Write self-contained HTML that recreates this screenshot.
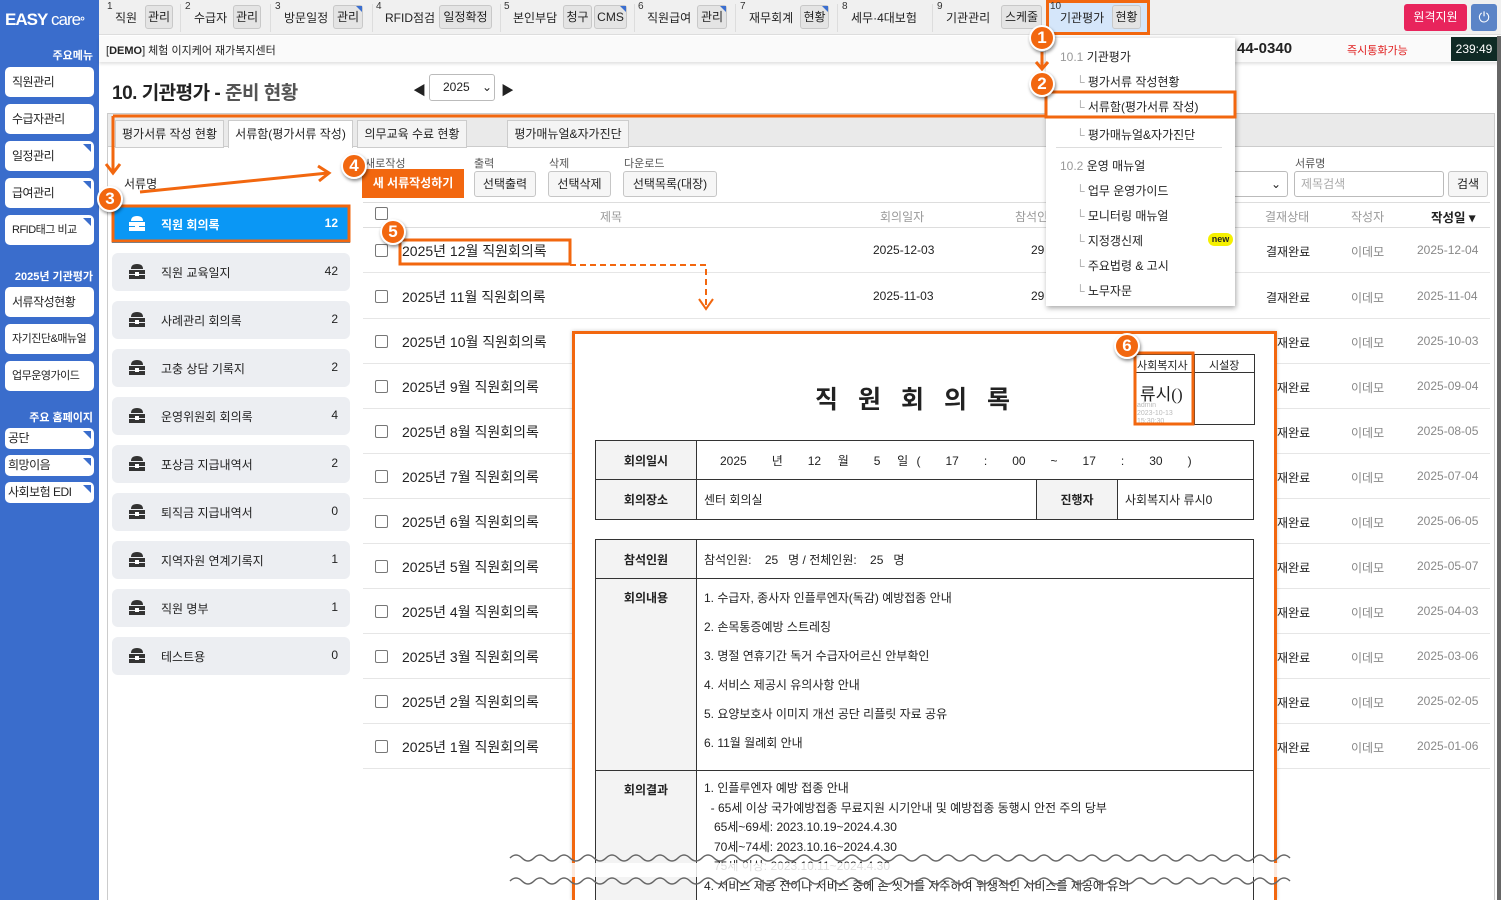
<!DOCTYPE html>
<html style="overflow:hidden;height:900px"><head><meta charset="utf-8"><style>
*{box-sizing:border-box;margin:0;padding:0}
body{width:1501px;height:900px;overflow:hidden;position:relative;background:#fff;font-family:"Liberation Sans","Noto Sans CJK KR",sans-serif;font-size:12px;color:#222}
.a{position:absolute;white-space:nowrap}
.sb{position:absolute;left:0;top:0;width:99px;height:900px;background:#3a6dcc}
.sbtn{position:absolute;left:5px;width:89px;background:#fff;border-radius:5px;font-size:12px;padding-left:7px;color:#222;letter-spacing:-.5px}
.sbtn.c::after{content:"";position:absolute;right:3px;top:3px;border-top:8px solid #3a6dcc;border-left:8px solid transparent}
.sl{position:absolute;right:6px;color:#fff;font-weight:bold;font-size:11px}
.nav{position:absolute;left:99px;top:0;width:1402px;height:35px;background:#f0f0f0;border-bottom:1px solid #ddd}
.n{position:absolute;top:1px;font-size:10px;color:#333}
.nl{position:absolute;top:9px;font-size:12px;color:#222}
.nb{position:absolute;top:5px;height:24px;background:#e4e4e4;border:1px solid #c8c8c8;border-radius:3px;font-size:12px;text-align:center;line-height:22px;color:#222}
.nb.c::after{content:"";position:absolute;right:0;top:0;border-top:6px solid #3b6fd0;border-left:6px solid transparent}
.sep{position:absolute;top:4px;width:1px;height:28px;background:#ddd}
.li{position:absolute;left:112px;width:238px;height:38px;background:#eceef2;border-radius:6px;font-size:12px}
.li .t{position:absolute;left:49px;top:11px}
.li .k{position:absolute;right:12px;top:11px}
.li svg{position:absolute;left:17px;top:10px}
.row{position:absolute;left:363px;width:1127px;height:45px;border-bottom:1px solid #e6e6e6}
.row .cb{position:absolute;left:12px;top:16px;width:13px;height:13px;border:1px solid #777;border-radius:2px;background:#fff}
.row .tt{position:absolute;left:39px;top:13px;font-size:14px;color:#222}
.row .s{position:absolute;left:903px;top:15px;color:#222}
.row .w{position:absolute;left:988px;top:15px;color:#888}
.row .d{position:absolute;left:1054px;top:15px;color:#888}
.btn{position:absolute;top:171px;height:26px;background:#f6f6f6;border:1px solid #c6c6c6;border-radius:3px;text-align:center;line-height:24px;font-size:12px}
.dm{position:absolute;font-size:12px;color:#222}
.circ{position:absolute;width:26px;height:26px;border-radius:50%;background:#f2670f;border:2px solid #fff;box-shadow:1px 2px 3px rgba(0,0,0,.45);color:#fff;font-weight:bold;font-size:17px;text-align:center;line-height:22px}
td{border:1px solid #333;font-size:12px}
.lb{background:#f3f3f3;text-align:center;font-weight:bold;width:101px}
</style></head><body>

<div class="sb">
 <div class="a" style="left:5px;top:10px;color:#fff;font-weight:bold;font-size:17px;letter-spacing:-1px">EASY<span style="font-weight:normal"> care</span><span style="font-size:12px">°</span></div>
 <div class="sl" style="top:47px">주요메뉴</div>
 <div class="sbtn" style="top:67px;height:30px;line-height:30px">직원관리</div>
 <div class="sbtn" style="top:104px;height:30px;line-height:30px">수급자관리</div>
 <div class="sbtn c" style="top:141px;height:30px;line-height:30px">일정관리</div>
 <div class="sbtn c" style="top:178px;height:30px;line-height:30px">급여관리</div>
 <div class="sbtn c" style="top:215px;height:30px;line-height:30px;font-size:11px">RFID태그 비교</div>
 <div class="sl" style="top:268px">2025년 기관평가</div>
 <div class="sbtn" style="top:287px;height:30px;line-height:30px">서류작성현황</div>
 <div class="sbtn" style="top:324px;height:30px;line-height:30px;font-size:11px">자기진단&amp;매뉴얼</div>
 <div class="sbtn" style="top:361px;height:30px;line-height:30px;font-size:11px">업무운영가이드</div>
 <div class="sl" style="top:409px">주요 홈페이지</div>
 <div class="sbtn c" style="top:428px;height:21px;line-height:21px;padding-left:3px">공단</div>
 <div class="sbtn c" style="top:455px;height:21px;line-height:21px;padding-left:3px">희망이음</div>
 <div class="sbtn c" style="top:482px;height:21px;line-height:21px;padding-left:3px">사회보험 EDI</div>
</div>

<div class="nav"></div>
<div class="n" style="left:107px">1</div><div class="nl" style="left:115px">직원</div><div class="nb" style="left:145px;width:28px">관리</div><div class="sep" style="left:180px"></div>
<div class="n" style="left:185px">2</div><div class="nl" style="left:194px">수급자</div><div class="nb" style="left:233px;width:28px">관리</div><div class="sep" style="left:270px"></div>
<div class="n" style="left:275px">3</div><div class="nl" style="left:284px">방문일정</div><div class="nb c" style="left:333px;width:30px">관리</div><div class="sep" style="left:372px"></div>
<div class="n" style="left:376px">4</div><div class="nl" style="left:385px">RFID점검</div><div class="nb" style="left:439px;width:53px">일정확정</div><div class="sep" style="left:500px"></div>
<div class="n" style="left:504px">5</div><div class="nl" style="left:513px">본인부담</div><div class="nb" style="left:563px;width:29px">청구</div><div class="nb c" style="left:594px;width:33px">CMS</div><div class="sep" style="left:634px"></div>
<div class="n" style="left:638px">6</div><div class="nl" style="left:647px">직원급여</div><div class="nb c" style="left:697px;width:30px">관리</div><div class="sep" style="left:735px"></div>
<div class="n" style="left:740px">7</div><div class="nl" style="left:749px">재무회계</div><div class="nb c" style="left:800px;width:29px">현황</div><div class="sep" style="left:837px"></div>
<div class="n" style="left:842px">8</div><div class="nl" style="left:851px">세무·4대보험</div><div class="sep" style="left:932px"></div>
<div class="n" style="left:937px">9</div><div class="nl" style="left:946px">기관관리</div><div class="nb" style="left:1001px;width:41px">스케줄</div>
<div class="a" style="left:1046px;top:0;width:104px;height:35px;background:#d5e6fa;border:3px solid #f2670f"></div>
<div class="n" style="left:1050px">10</div><div class="nl" style="left:1060px">기관평가</div><div class="nb" style="left:1112px;width:29px">현황</div>
<div class="a" style="left:1404px;top:4px;width:63px;height:27px;background:#e8245c;border-radius:3px;color:#fff;text-align:center;line-height:27px">원격지원</div>
<div class="a" style="left:1471px;top:4px;width:26px;height:27px;background:#5b84c7;border-radius:3px;color:#fff;text-align:center;line-height:27px;font-size:14px">⏻</div>

<div class="a" style="left:99px;top:36px;width:1402px;height:26px;background:#fafafa;box-shadow:0 2px 3px rgba(0,0,0,.12)"></div>
<div class="a" style="left:106px;top:42px;font-size:11px">[<b>DEMO</b>] 체험 이지케어 재가복지센터</div>
<div class="a" style="left:1237px;top:40px;font-size:15px;font-weight:bold">44-0340</div>
<div class="a" style="left:1347px;top:42px;font-size:11px;color:#e02020">즉시통화가능</div>
<div class="a" style="left:1451px;top:37px;width:46px;height:24px;background:#0f2a25;color:#fff;font-size:12px;line-height:24px;text-align:center">239:49</div>
<div class="a" style="left:1497px;top:36px;width:4px;height:864px;background:#666"></div>

<div class="a" style="left:112px;top:78px;font-size:19px;font-weight:bold;letter-spacing:-.5px">10. 기관평가 - <span style="color:#555">준비 현황</span></div>
<div class="a" style="left:413px;top:80px;font-size:13px">◀</div>
<div class="a" style="left:429px;top:74px;width:66px;height:27px;border:1px solid #bbb;border-radius:3px;font-size:12px;line-height:25px;padding-left:13px">2025 <span style="margin-left:9px">⌄</span></div>
<div class="a" style="left:501px;top:80px;font-size:13px">▶</div>

<div class="a" style="left:107px;top:113px;width:1388px;height:787px;border:1px solid #ccc;border-bottom:none;background:#fff"></div>
<div class="a" style="left:108px;top:114px;width:1386px;height:33px;background:#eaeaea;border-bottom:1px solid #ccc"></div>
<div class="a" style="left:115px;top:120px;width:109px;height:28px;background:#f4f4f4;border:1px solid #ccc;text-align:center;line-height:26px">평가서류 작성 현황</div>
<div class="a" style="left:228px;top:120px;width:125px;height:28px;background:#fff;border:1px solid #ccc;border-bottom:none;text-align:center;line-height:26px">서류함(평가서류 작성)</div>
<div class="a" style="left:357px;top:120px;width:110px;height:28px;background:#f4f4f4;border:1px solid #ccc;text-align:center;line-height:26px">의무교육 수료 현황</div>
<div class="a" style="left:507px;top:120px;width:122px;height:28px;background:#f4f4f4;border:1px solid #ccc;text-align:center;line-height:26px">평가매뉴얼&amp;자가진단</div>

<div class="a" style="left:124px;top:175px">서류명</div>
<svg width="0" height="0" style="position:absolute"><defs><g id="ic"><path d="M2 6 Q2 1 8 1 Q14 1 14 6 Z" fill="currentColor"/><rect x="0" y="7" width="16" height="4" fill="currentColor"/><rect x="0" y="12" width="16" height="4" fill="currentColor"/><rect x="6" y="9" width="4" height="4" fill="#fff"/></g></defs></svg>
<div class="li" style="top:205px;background:#0a97f5;color:#fff;font-weight:bold;border-radius:0"><svg width="16" height="16" style="color:#fff"><use href="#ic"/></svg><span class="t">직원 회의록</span><span class="k">12</span></div>
<div class="li" style="top:253px"><svg width="16" height="16" style="color:#333"><use href="#ic"/></svg><span class="t">직원 교육일지</span><span class="k">42</span></div>
<div class="li" style="top:301px"><svg width="16" height="16" style="color:#333"><use href="#ic"/></svg><span class="t">사례관리 회의록</span><span class="k">2</span></div>
<div class="li" style="top:349px"><svg width="16" height="16" style="color:#333"><use href="#ic"/></svg><span class="t">고충 상담 기록지</span><span class="k">2</span></div>
<div class="li" style="top:397px"><svg width="16" height="16" style="color:#333"><use href="#ic"/></svg><span class="t">운영위원회 회의록</span><span class="k">4</span></div>
<div class="li" style="top:445px"><svg width="16" height="16" style="color:#333"><use href="#ic"/></svg><span class="t">포상금 지급내역서</span><span class="k">2</span></div>
<div class="li" style="top:493px"><svg width="16" height="16" style="color:#333"><use href="#ic"/></svg><span class="t">퇴직금 지급내역서</span><span class="k">0</span></div>
<div class="li" style="top:541px"><svg width="16" height="16" style="color:#333"><use href="#ic"/></svg><span class="t">지역자원 연계기록지</span><span class="k">1</span></div>
<div class="li" style="top:589px"><svg width="16" height="16" style="color:#333"><use href="#ic"/></svg><span class="t">직원 명부</span><span class="k">1</span></div>
<div class="li" style="top:637px"><svg width="16" height="16" style="color:#333"><use href="#ic"/></svg><span class="t">테스트용</span><span class="k">0</span></div>

<div class="a" style="left:365px;top:155px;font-size:11px;color:#555">새로작성</div>
<div class="a" style="left:474px;top:155px;font-size:11px;color:#555">출력</div>
<div class="a" style="left:549px;top:155px;font-size:11px;color:#555">삭제</div>
<div class="a" style="left:624px;top:155px;font-size:11px;color:#555">다운로드</div>
<div class="a" style="left:362px;top:169px;width:102px;height:29px;background:#f2670f;color:#fff;font-weight:bold;text-align:center;line-height:29px">새 서류작성하기</div>
<div class="btn" style="left:474px;width:62px">선택출력</div>
<div class="btn" style="left:548px;width:63px">선택삭제</div>
<div class="btn" style="left:623px;width:94px">선택목록(대장)</div>
<div class="a" style="left:1220px;top:171px;width:68px;height:26px;border:1px solid #bbb;border-radius:3px;text-align:right;padding-right:6px;line-height:24px">⌄</div>
<div class="a" style="left:1295px;top:155px;font-size:11px;color:#555">서류명</div>
<div class="a" style="left:1294px;top:171px;width:150px;height:26px;border:1px solid #bbb;border-radius:3px;color:#aaa;padding-left:6px;line-height:24px">제목검색</div>
<div class="btn" style="left:1448px;width:40px">검색</div>

<div class="a" style="left:363px;top:202px;width:1127px;height:26px;border-top:1px solid #ddd;border-bottom:1px solid #ddd"></div>
<div class="a" style="left:375px;top:207px;width:13px;height:13px;border:1px solid #777;border-radius:2px"></div>
<div class="a" style="left:600px;top:208px;color:#999">제목</div>
<div class="a" style="left:880px;top:208px;color:#999">회의일자</div>
<div class="a" style="left:1015px;top:208px;color:#999">참석인</div>
<div class="a" style="left:1265px;top:208px;color:#999">결재상태</div>
<div class="a" style="left:1351px;top:208px;color:#999">작성자</div>
<div class="a" style="left:1431px;top:207px;font-weight:bold;font-size:12.5px">작성일 ▾</div>

<div class="row" style="top:228px"><div class="cb"></div><div class="tt">2025년 12월 직원회의록</div><div class="a" style="left:510px;top:15px">2025-12-03</div><div class="a" style="left:668px;top:15px">29</div><div class="s">결재완료</div><div class="w">이데모</div><div class="d">2025-12-04</div></div>
<div class="row" style="top:274px"><div class="cb"></div><div class="tt">2025년 11월 직원회의록</div><div class="a" style="left:510px;top:15px">2025-11-03</div><div class="a" style="left:668px;top:15px">29</div><div class="s">결재완료</div><div class="w">이데모</div><div class="d">2025-11-04</div></div>
<div class="row" style="top:319px"><div class="cb"></div><div class="tt">2025년 10월 직원회의록</div><div class="s">결재완료</div><div class="w">이데모</div><div class="d">2025-10-03</div></div>
<div class="row" style="top:364px"><div class="cb"></div><div class="tt">2025년 9월 직원회의록</div><div class="s">결재완료</div><div class="w">이데모</div><div class="d">2025-09-04</div></div>
<div class="row" style="top:409px"><div class="cb"></div><div class="tt">2025년 8월 직원회의록</div><div class="s">결재완료</div><div class="w">이데모</div><div class="d">2025-08-05</div></div>
<div class="row" style="top:454px"><div class="cb"></div><div class="tt">2025년 7월 직원회의록</div><div class="s">결재완료</div><div class="w">이데모</div><div class="d">2025-07-04</div></div>
<div class="row" style="top:499px"><div class="cb"></div><div class="tt">2025년 6월 직원회의록</div><div class="s">결재완료</div><div class="w">이데모</div><div class="d">2025-06-05</div></div>
<div class="row" style="top:544px"><div class="cb"></div><div class="tt">2025년 5월 직원회의록</div><div class="s">결재완료</div><div class="w">이데모</div><div class="d">2025-05-07</div></div>
<div class="row" style="top:589px"><div class="cb"></div><div class="tt">2025년 4월 직원회의록</div><div class="s">결재완료</div><div class="w">이데모</div><div class="d">2025-04-03</div></div>
<div class="row" style="top:634px"><div class="cb"></div><div class="tt">2025년 3월 직원회의록</div><div class="s">결재완료</div><div class="w">이데모</div><div class="d">2025-03-06</div></div>
<div class="row" style="top:679px"><div class="cb"></div><div class="tt">2025년 2월 직원회의록</div><div class="s">결재완료</div><div class="w">이데모</div><div class="d">2025-02-05</div></div>
<div class="row" style="top:724px"><div class="cb"></div><div class="tt">2025년 1월 직원회의록</div><div class="s">결재완료</div><div class="w">이데모</div><div class="d">2025-01-06</div></div>

<!-- dropdown -->
<div class="a" style="left:1046px;top:38px;width:189px;height:268px;background:#fff;box-shadow:1px 2px 5px rgba(0,0,0,.35)"></div>
<div class="dm" style="left:1060px;top:48px"><span style="color:#999">10.1</span> 기관평가</div>
<div class="dm" style="left:1076px;top:73px"><span style="color:#aaa">└</span> 평가서류 작성현황</div>
<div class="dm" style="left:1076px;top:98px"><span style="color:#aaa">└</span> 서류함(평가서류 작성)</div>
<div class="dm" style="left:1076px;top:126px"><span style="color:#aaa">└</span> 평가매뉴얼&amp;자가진단</div>
<div class="a" style="left:1056px;top:147px;width:166px;height:1px;background:#ddd"></div>
<div class="dm" style="left:1060px;top:157px"><span style="color:#999">10.2</span> 운영 매뉴얼</div>
<div class="dm" style="left:1076px;top:182px"><span style="color:#aaa">└</span> 업무 운영가이드</div>
<div class="dm" style="left:1076px;top:207px"><span style="color:#aaa">└</span> 모니터링 매뉴얼</div>
<div class="dm" style="left:1076px;top:232px"><span style="color:#aaa">└</span> 지정갱신제</div>
<div class="a" style="left:1208px;top:233px;width:25px;height:13px;background:#f5f000;border-radius:7px;font-size:9px;font-weight:bold;text-align:center;line-height:13px">new</div>
<div class="dm" style="left:1076px;top:257px"><span style="color:#aaa">└</span> 주요법령 &amp; 고시</div>
<div class="dm" style="left:1076px;top:282px"><span style="color:#aaa">└</span> 노무자문</div>

<!-- document -->
<div class="a" style="left:572px;top:331px;width:705px;height:569px;background:#fff;border:3px solid #f2670f;border-bottom:none;box-shadow:0 0 4px rgba(0,0,0,.2);overflow:hidden">
<div class="a" style="left:240px;top:46px;font-size:25px;font-weight:bold;letter-spacing:20px">직원회의록</div>
<div class="a" style="left:559px;top:20px;width:121px;height:71px;border:1px solid #333"></div>
<div class="a" style="left:559px;top:20px;width:121px;height:19px;border-bottom:1px solid #333"></div>
<div class="a" style="left:619px;top:20px;width:1px;height:71px;background:#333"></div>
<div class="a" style="left:562px;top:23px;font-size:11px">사회복지사</div>
<div class="a" style="left:634px;top:23px;font-size:11px">시설장</div>
<div class="a" style="left:565px;top:46px;font-size:17px;font-family:'Liberation Serif',serif">류시()</div>
<div class="a" style="left:562px;top:68px;font-size:7px;color:#bbb;line-height:8px">admin<br>2023-10-13<br>15:30:30</div>

<table class="a" style="left:20px;top:106px;width:659px;height:80px;border-collapse:collapse">
<tr style="height:39px"><td class="lb">회의일시</td><td colspan="3" style="padding-left:23px;word-spacing:5px">2025 &nbsp; 년 &nbsp; 12 &nbsp;월 &nbsp; 5 &nbsp;일 ( &nbsp; 17 &nbsp; : &nbsp; 00 &nbsp; ~ &nbsp; 17 &nbsp; : &nbsp; 30 &nbsp; )</td></tr>
<tr><td class="lb">회의장소</td><td style="padding-left:7px">센터 회의실</td><td class="lb" style="width:81px">진행자</td><td style="width:136px;padding-left:7px">사회복지사 류시0</td></tr>
</table>
<table class="a" style="left:20px;top:205px;width:659px;border-collapse:collapse">
<tr style="height:39px"><td class="lb">참석인원</td><td style="padding-left:7px">참석인원: &nbsp; &nbsp;25 &nbsp; 명 / 전체인원: &nbsp; &nbsp;25 &nbsp; 명</td></tr>
<tr style="height:192px"><td class="lb" style="vertical-align:top;padding-top:10px">회의내용</td><td style="vertical-align:top;padding:5px 7px;line-height:29px">1. 수급자, 종사자 인플루엔자(독감) 예방접종 안내<br>2. 손목통증예방 스트레칭<br>3. 명절 연휴기간 독거 수급자어르신 안부확인<br>4. 서비스 제공시 유의사항 안내<br>5. 요양보호사 이미지 개선 공단 리플릿 자료 공유<br>6. 11월 월례회 안내</td></tr>
<tr style="height:140px"><td class="lb" style="vertical-align:top;padding-top:10px">회의결과</td><td style="vertical-align:top;padding:8px 7px;line-height:19.5px">1. 인플루엔자 예방 접종 안내<br>&nbsp; - 65세 이상 국가예방접종 무료지원 시기안내 및 예방접종 동행시 안전 주의 당부<br>&nbsp; &nbsp;65세~69세: 2023.10.19~2024.4.30<br>&nbsp; &nbsp;70세~74세: 2023.10.16~2024.4.30<br>&nbsp; &nbsp;75세 이상: 2023.10.11~2024.4.30<br>4. 서비스 제공 전이나 서비스 중에 손 씻기를 자주하여 위생적인 서비스를 제공에 유의</td></tr>
</table>
</div>

<svg class="a" style="left:0;top:0" width="1501" height="900">
 <rect x="510" y="863" width="780" height="14" fill="#fff" opacity=".85"/>
 <path id="wv" d="M510 858 q6 -6 12 0 t12 0 t12 0 t12 0 t12 0 t12 0 t12 0 t12 0 t12 0 t12 0 t12 0 t12 0 t12 0 t12 0 t12 0 t12 0 t12 0 t12 0 t12 0 t12 0 t12 0 t12 0 t12 0 t12 0 t12 0 t12 0 t12 0 t12 0 t12 0 t12 0 t12 0 t12 0 t12 0 t12 0 t12 0 t12 0 t12 0 t12 0 t12 0 t12 0 t12 0 t12 0 t12 0 t12 0 t12 0 t12 0 t12 0 t12 0 t12 0 t12 0 t12 0 t12 0 t12 0 t12 0 t12 0 t12 0 t12 0 t12 0 t12 0 t12 0 t12 0 t12 0 t12 0 t12 0 t12 0" fill="none" stroke="#666" stroke-width="1.5"/>
 <use href="#wv" y="23"/>
 <g stroke="#f2670f" fill="none" stroke-width="3">
  <path d="M113 116 H1046"/><path d="M113 116 V172"/><path d="M106 164 L113 173 L120 164"/>
  <path d="M140 192 L328 173"/><path d="M318 166 L329 173 L319 181"/>
  <path d="M1042 52 V68"/><path d="M1036 62 L1042 69 L1048 62"/>
  <rect x="113" y="206" width="236" height="35"/>
  <rect x="400" y="240" width="170" height="24"/>
  <rect x="1135" y="353" width="58" height="71"/>
  <rect x="1046" y="92" width="189" height="25"/>
  <path d="M570 265 H706 V305" stroke-dasharray="6 4" stroke-width="2"/><path d="M699 299 L706 309 L713 299" stroke-width="2"/>
 </g>
</svg>
<div class="circ" style="left:1029px;top:25px">1</div>
<div class="circ" style="left:1029px;top:71px">2</div>
<div class="circ" style="left:97px;top:186px">3</div>
<div class="circ" style="left:341px;top:153px">4</div>
<div class="circ" style="left:380px;top:219px">5</div>
<div class="circ" style="left:1114px;top:333px">6</div>
</body></html>
